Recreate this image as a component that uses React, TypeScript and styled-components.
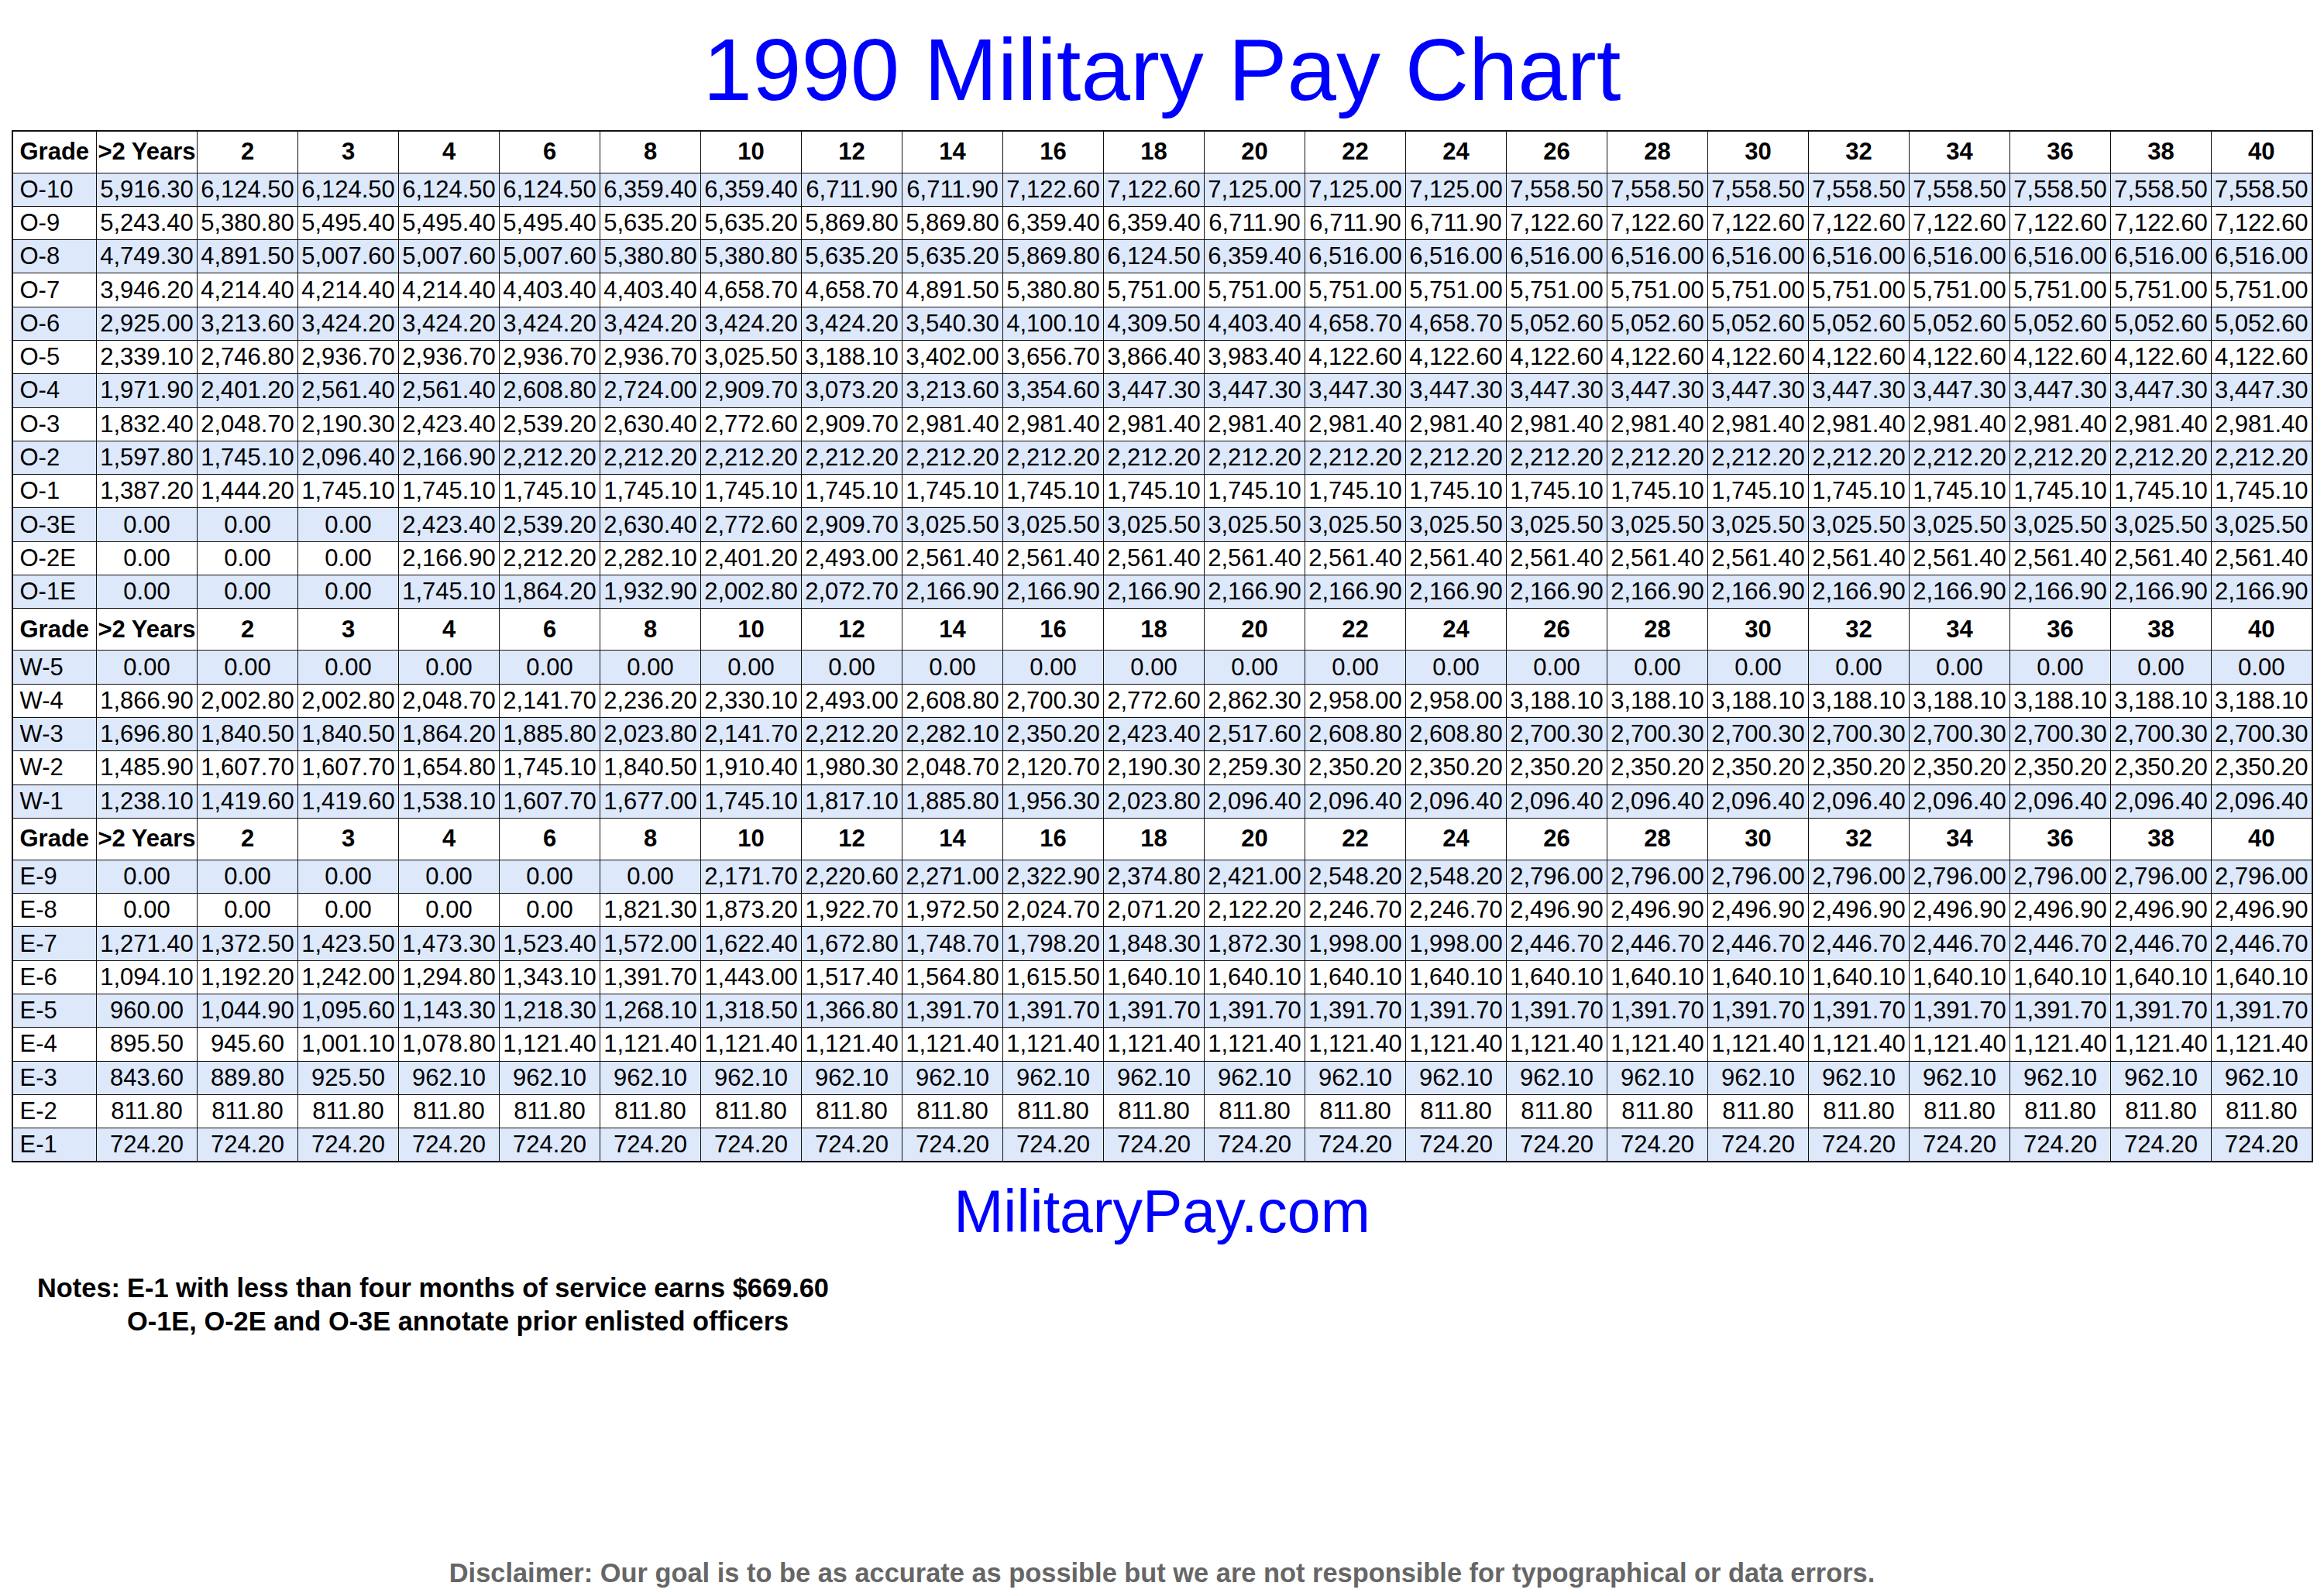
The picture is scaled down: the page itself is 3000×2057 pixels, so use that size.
import React from 'react';
import styled, { createGlobalStyle } from 'styled-components';

const GlobalStyle = createGlobalStyle`
  html, body {
    margin: 0;
    padding: 0;
    background: #ffffff;
  }
  body {
    font-family: "Liberation Sans", Arial, Helvetica, sans-serif;
    color: #000;
  }
`;

const Page = styled.div`
  width: 3000px;
  min-height: 2057px;
  display: flex;
  flex-direction: column;
  align-items: center;
  box-sizing: border-box;
`;

const Title = styled.h1`
  margin: 24px 0 0;
  font-size: 114px;
  font-weight: normal;
  line-height: normal;
  color: #0000ff;
`;

const PayTable = styled.table`
  margin-top: 13px;
  width: 2971px;
  border-collapse: collapse;
  table-layout: fixed;
  border: 2px solid #111;
  font-size: 31px;
`;

const Row = styled.tr<{ $shade?: boolean; $head?: boolean }>`
  height: ${p => (p.$head ? '54px' : '43.3px')};
  background: ${p => (p.$shade ? '#dde8fb' : '#ffffff')};
`;

const HeadCell = styled.th<{ $left?: boolean }>`
  border: 1px solid #111;
  padding: 0 0 0 ${p => (p.$left ? '9px' : '0')};
  text-align: ${p => (p.$left ? 'left' : 'center')};
  font-weight: bold;
  white-space: nowrap;
  overflow: hidden;
`;

const Cell = styled.td<{ $left?: boolean }>`
  border: 1px solid #111;
  padding: 0 0 0 ${p => (p.$left ? '9px' : '0')};
  text-align: ${p => (p.$left ? 'left' : 'center')};
  white-space: nowrap;
  overflow: hidden;
`;

const SiteName = styled.div`
  margin-top: 19px;
  font-size: 77px;
  line-height: normal;
  color: #0000ff;
`;

const Notes = styled.div`
  align-self: flex-start;
  margin: 33px 0 0 48px;
  display: flex;
  gap: 9px;
  font-size: 34.4px;
  font-weight: bold;
  line-height: 43px;
`;

const NoteLines = styled.div`
  display: flex;
  flex-direction: column;
`;

const Disclaimer = styled.div`
  margin-top: 284px;
  font-size: 34.4px;
  font-weight: bold;
  line-height: normal;
  color: #666666;
`;

const years = ['>2 Years', '2', '3', '4', '6', '8', '10', '12', '14', '16', '18', '20', '22', '24', '26', '28', '30', '32', '34', '36', '38', '40'];

const fill = (vals: string[], last: string) => [...vals, ...Array(22 - vals.length).fill(last)];

type PayRow = [string, string[]];

const officers: PayRow[] = [
  ['O-10', fill(['5,916.30', '6,124.50', '6,124.50', '6,124.50', '6,124.50', '6,359.40', '6,359.40', '6,711.90', '6,711.90', '7,122.60', '7,122.60', '7,125.00', '7,125.00', '7,125.00'], '7,558.50')],
  ['O-9', fill(['5,243.40', '5,380.80', '5,495.40', '5,495.40', '5,495.40', '5,635.20', '5,635.20', '5,869.80', '5,869.80', '6,359.40', '6,359.40', '6,711.90', '6,711.90', '6,711.90'], '7,122.60')],
  ['O-8', fill(['4,749.30', '4,891.50', '5,007.60', '5,007.60', '5,007.60', '5,380.80', '5,380.80', '5,635.20', '5,635.20', '5,869.80', '6,124.50', '6,359.40'], '6,516.00')],
  ['O-7', fill(['3,946.20', '4,214.40', '4,214.40', '4,214.40', '4,403.40', '4,403.40', '4,658.70', '4,658.70', '4,891.50', '5,380.80'], '5,751.00')],
  ['O-6', fill(['2,925.00', '3,213.60', '3,424.20', '3,424.20', '3,424.20', '3,424.20', '3,424.20', '3,424.20', '3,540.30', '4,100.10', '4,309.50', '4,403.40', '4,658.70', '4,658.70'], '5,052.60')],
  ['O-5', fill(['2,339.10', '2,746.80', '2,936.70', '2,936.70', '2,936.70', '2,936.70', '3,025.50', '3,188.10', '3,402.00', '3,656.70', '3,866.40', '3,983.40'], '4,122.60')],
  ['O-4', fill(['1,971.90', '2,401.20', '2,561.40', '2,561.40', '2,608.80', '2,724.00', '2,909.70', '3,073.20', '3,213.60', '3,354.60'], '3,447.30')],
  ['O-3', fill(['1,832.40', '2,048.70', '2,190.30', '2,423.40', '2,539.20', '2,630.40', '2,772.60', '2,909.70'], '2,981.40')],
  ['O-2', fill(['1,597.80', '1,745.10', '2,096.40', '2,166.90'], '2,212.20')],
  ['O-1', fill(['1,387.20', '1,444.20'], '1,745.10')],
  ['O-3E', fill(['0.00', '0.00', '0.00', '2,423.40', '2,539.20', '2,630.40', '2,772.60', '2,909.70'], '3,025.50')],
  ['O-2E', fill(['0.00', '0.00', '0.00', '2,166.90', '2,212.20', '2,282.10', '2,401.20', '2,493.00'], '2,561.40')],
  ['O-1E', fill(['0.00', '0.00', '0.00', '1,745.10', '1,864.20', '1,932.90', '2,002.80', '2,072.70'], '2,166.90')],
];

const warrants: PayRow[] = [
  ['W-5', fill([], '0.00')],
  ['W-4', fill(['1,866.90', '2,002.80', '2,002.80', '2,048.70', '2,141.70', '2,236.20', '2,330.10', '2,493.00', '2,608.80', '2,700.30', '2,772.60', '2,862.30', '2,958.00', '2,958.00'], '3,188.10')],
  ['W-3', fill(['1,696.80', '1,840.50', '1,840.50', '1,864.20', '1,885.80', '2,023.80', '2,141.70', '2,212.20', '2,282.10', '2,350.20', '2,423.40', '2,517.60', '2,608.80', '2,608.80'], '2,700.30')],
  ['W-2', fill(['1,485.90', '1,607.70', '1,607.70', '1,654.80', '1,745.10', '1,840.50', '1,910.40', '1,980.30', '2,048.70', '2,120.70', '2,190.30', '2,259.30'], '2,350.20')],
  ['W-1', fill(['1,238.10', '1,419.60', '1,419.60', '1,538.10', '1,607.70', '1,677.00', '1,745.10', '1,817.10', '1,885.80', '1,956.30', '2,023.80'], '2,096.40')],
];

const enlisted: PayRow[] = [
  ['E-9', fill(['0.00', '0.00', '0.00', '0.00', '0.00', '0.00', '2,171.70', '2,220.60', '2,271.00', '2,322.90', '2,374.80', '2,421.00', '2,548.20', '2,548.20'], '2,796.00')],
  ['E-8', fill(['0.00', '0.00', '0.00', '0.00', '0.00', '1,821.30', '1,873.20', '1,922.70', '1,972.50', '2,024.70', '2,071.20', '2,122.20', '2,246.70', '2,246.70'], '2,496.90')],
  ['E-7', fill(['1,271.40', '1,372.50', '1,423.50', '1,473.30', '1,523.40', '1,572.00', '1,622.40', '1,672.80', '1,748.70', '1,798.20', '1,848.30', '1,872.30', '1,998.00', '1,998.00'], '2,446.70')],
  ['E-6', fill(['1,094.10', '1,192.20', '1,242.00', '1,294.80', '1,343.10', '1,391.70', '1,443.00', '1,517.40', '1,564.80', '1,615.50'], '1,640.10')],
  ['E-5', fill(['960.00', '1,044.90', '1,095.60', '1,143.30', '1,218.30', '1,268.10', '1,318.50', '1,366.80'], '1,391.70')],
  ['E-4', fill(['895.50', '945.60', '1,001.10', '1,078.80'], '1,121.40')],
  ['E-3', fill(['843.60', '889.80', '925.50'], '962.10')],
  ['E-2', fill([], '811.80')],
  ['E-1', fill([], '724.20')],
];

const HeaderRow: React.FC = () => (
  <Row $head>
    <HeadCell $left>Grade</HeadCell>
    {years.map(y => (
      <HeadCell key={y}>{y}</HeadCell>
    ))}
  </Row>
);

const Section: React.FC<{ rows: PayRow[] }> = ({ rows }) => (
  <>
    <HeaderRow />
    {rows.map(([grade, vals], i) => (
      <Row key={grade} $shade={i % 2 === 0}>
        <Cell $left>{grade}</Cell>
        {vals.map((v, j) => (
          <Cell key={j}>{v}</Cell>
        ))}
      </Row>
    ))}
  </>
);

const App: React.FC = () => (
  <Page>
    <GlobalStyle />
    <Title>1990 Military Pay Chart</Title>
    <PayTable>
      <colgroup>
        <col style={{ width: 109 }} />
        {years.map(y => (
          <col key={y} style={{ width: 130 }} />
        ))}
      </colgroup>
      <tbody>
        <Section rows={officers} />
        <Section rows={warrants} />
        <Section rows={enlisted} />
      </tbody>
    </PayTable>
    <SiteName>MilitaryPay.com</SiteName>
    <Notes>
      <span>Notes:</span>
      <NoteLines>
        <span>E-1 with less than four months of service earns $669.60</span>
        <span>O-1E, O-2E and O-3E annotate prior enlisted officers</span>
      </NoteLines>
    </Notes>
    <Disclaimer>Disclaimer: Our goal is to be as accurate as possible but we are not responsible for typographical or data errors.</Disclaimer>
  </Page>
);

export default App;
